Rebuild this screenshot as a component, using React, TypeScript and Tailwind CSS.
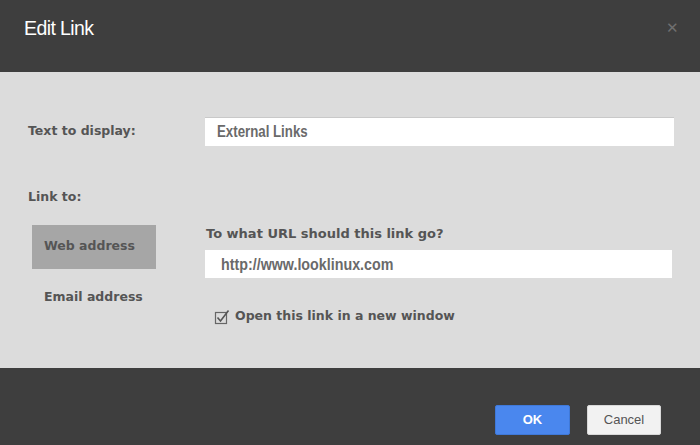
import { useState } from "react";

export default function App() {
  const [newWindow, setNewWindow] = useState(true);
  const [mode, setMode] = useState("web");

  const label = "font-['DejaVu_Sans',Verdana,sans-serif] font-bold text-[12.5px] text-[#555]";
  const field =
    "bg-white font-['Liberation_Sans',Arial,sans-serif] font-bold text-[17px] text-[#6a6a6a] flex items-center";

  return (
    <div className="w-[700px] h-[445px] flex flex-col bg-[#dcdcdc] overflow-hidden">
      {/* Header */}
      <header className="h-[72px] bg-[#3e3e3e] flex justify-between items-start pl-[24px] pr-[21px] pt-[14px]">
        <h1 className="font-['Liberation_Sans',Arial,sans-serif] text-[19.5px] text-white tracking-[-0.6px]">Edit Link</h1>
        <span className="mt-[3px] text-[#6f6f6f] text-[15px] font-['Liberation_Sans',Arial,sans-serif]">&#x2715;</span>
      </header>

      {/* Body */}
      <div className="flex-1 flex flex-col pl-[28px] pr-[26px]">
        <div className="mt-[45px] flex items-center">
          <span className={`${label} w-[177px]`}>Text to display:</span>
          <div className={`${field} h-[29px] flex-1 pl-[12px] border-t border-[#c9c9c9]`}>
            <span className="inline-block origin-left scale-x-[0.78]">External Links</span>
          </div>
        </div>

        <div className={`${label} mt-[42px]`}>Link to:</div>

        <div className="flex mt-[18px]">
          <div className="w-[177px] flex flex-col pl-[4px]">
            <button
              onClick={() => setMode("web")}
              className={`${label} w-[124px] h-[44px] text-left pl-[12px] ${mode === "web" ? "bg-[#a6a6a6]" : ""}`}
            >
              Web address
            </button>
            <button
              onClick={() => setMode("email")}
              className={`${label} w-[124px] h-[30px] mt-[14px] text-left pl-[12px] ${mode === "email" ? "bg-[#a6a6a6]" : ""}`}
            >
              Email address
            </button>
          </div>

          <div className="flex-1 flex flex-col pr-[2px]">
            <div className={`${label} text-[13px] mt-[-1px] pl-[1px]`}>To what URL should this link go?</div>
            <div className={`${field} h-[28px] mt-[7px] pl-[16px]`}>
              <span className="inline-block origin-left scale-x-[0.84]">http://www.looklinux.com</span>
            </div>
            <label className="flex items-center mt-[29px] ml-[9px] gap-[5px] cursor-pointer" onClick={() => setNewWindow(!newWindow)}>
              <svg width="16" height="16" viewBox="0 0 16 16">
                <rect x="1.5" y="3.5" width="11" height="11" fill="none" stroke="#666" strokeWidth="1.2" />
                {newWindow && <path d="M3.5 8.5 L6.5 12 L14.5 1.5" fill="none" stroke="#555" strokeWidth="1.6" />}
              </svg>
              <span className={label}>Open this link in a new window</span>
            </label>
          </div>
        </div>
      </div>

      {/* Footer */}
      <footer className="h-[77px] bg-[#3e3e3e] flex justify-end items-start pt-[37px] pr-[39px] gap-[17px]">
        <button className="w-[75px] h-[30px] bg-[#4a87ee] border border-[#3f79d9] rounded-[2px] text-white font-['Liberation_Sans',Arial,sans-serif] font-bold text-[13px]">
          OK
        </button>
        <button className="w-[74px] h-[30px] bg-[#f2f2f2] border border-[#d8d8d8] rounded-[2px] text-[#555] font-['Liberation_Sans',Arial,sans-serif] text-[13px]">
          Cancel
        </button>
      </footer>
    </div>
  );
}
